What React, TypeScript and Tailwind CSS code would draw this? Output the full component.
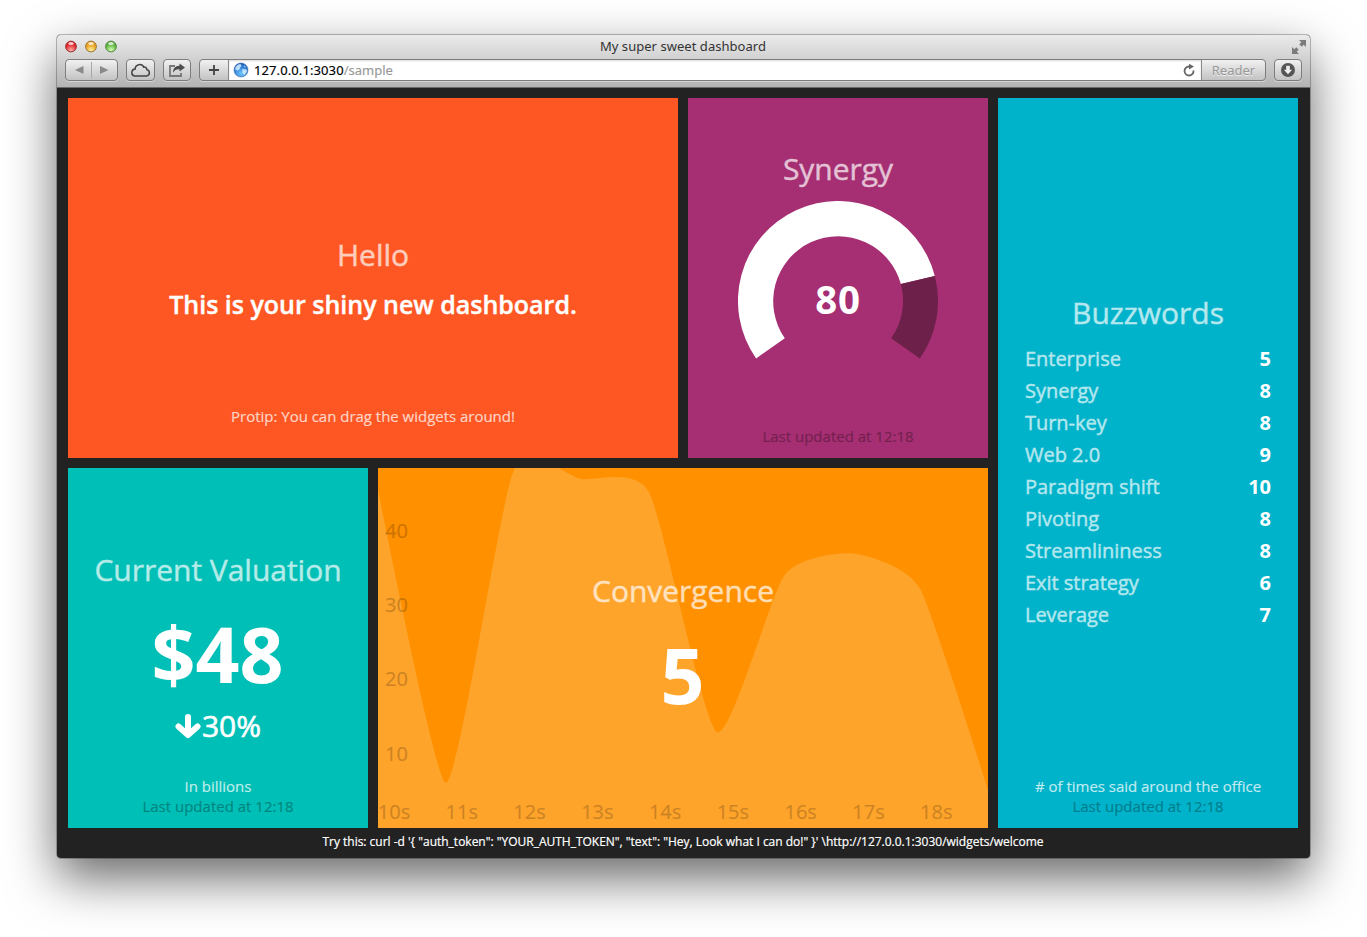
import React from "react";

const buzzwords: [string, number][] = [
  ["Enterprise", 5],
  ["Synergy", 8],
  ["Turn-key", 8],
  ["Web 2.0", 9],
  ["Paradigm shift", 10],
  ["Pivoting", 8],
  ["Streamlininess", 8],
  ["Exit strategy", 6],
  ["Leverage", 7],
];

const button =
  "flex h-[22px] items-center justify-center rounded-[4px] border border-[#7d7d7d] bg-gradient-to-b from-[#f1f1f1] to-[#c3c3c3] shadow-[0_1px_0_rgba(255,255,255,0.4)]";

function Chrome() {
  return (
    <header className="flex h-[53px] flex-col rounded-t-[4px] border-b border-[#6a6a6a] bg-gradient-to-b from-[#ebebeb] to-[#b3b3b3] font-['Noto_Sans',sans-serif]">
      <div className="grid h-[24px] grid-cols-3 items-center pl-[7px] pr-[3px]">
        <svg className="-mt-px" width="56" height="16" viewBox="0 0 56 16">
          <defs>
            {[
              ["red", "#ffb0a8", "#e0242a"],
              ["amber", "#fff0a0", "#e8a020"],
              ["green", "#d8ffb8", "#5cb440"],
            ].map(([id, a, b]) => (
              <radialGradient key={id} id={id} cx="0.5" cy="0.85" r="0.75">
                <stop offset="0" stopColor={a} />
                <stop offset="0.75" stopColor={b} />
              </radialGradient>
            ))}
          </defs>
          <circle cx="7" cy="7.500" r="5.400" fill="url(#red)" stroke="#8c2b2b" strokeOpacity="0.85" />
          <circle cx="27" cy="7.500" r="5.400" fill="url(#amber)" stroke="#8c6420" strokeOpacity="0.85" />
          <circle cx="47" cy="7.500" r="5.400" fill="url(#green)" stroke="#457a30" strokeOpacity="0.85" />
          <g fill="#fff" fillOpacity="0.75">
            <ellipse cx="7" cy="4.500" rx="2.800" ry="1.500" />
            <ellipse cx="27" cy="4.500" rx="2.800" ry="1.500" />
            <ellipse cx="47" cy="4.500" rx="2.800" ry="1.500" />
          </g>
        </svg>
        <div className="-mt-0.5 whitespace-nowrap pr-[5px] text-center text-[13px] leading-[22px] tracking-[0.04px] text-[#333]">My super sweet dashboard</div>
        <svg className="-mt-px justify-self-end" width="16" height="16" viewBox="0 0 16 16" fill="#7c7c7c">
          <path d="M8 1h7v7l-2.300-2.300-2 2-2.400-2.400 2-2zM8 15H1V8l2.300 2.300 2-2 2.400 2.400-2 2z" />
        </svg>
      </div>
      <div className="flex pl-2 pr-2">
        <div className={button + " w-[53px]"}>
          <svg width="51" height="20" viewBox="0 0 51 20">
            <path d="M17.500 6v8l-8.500-4zM34 6v8l8.500-4z" fill="#8a8a8a" />
            <path d="M25.500 2v16" stroke="#a8a8a8" />
          </svg>
        </div>
        <div className={button + " ml-2 w-[29px]"}>
          <svg width="21" height="14" viewBox="0 0 21 14" fill="none" stroke="#444" strokeWidth="1.500">
            <path d="M4.500 13h12a3.200 3.200 0 0 0 .4-6.300 2.500 2.500 0 0 0-3.100-2.500 4.500 4.500 0 0 0-8.600 1.900 3.500 3.500 0 0 0-.7 6.900z" />
          </svg>
        </div>
        <div className={button + " ml-2 w-[28px]"}>
          <svg width="18" height="16" viewBox="0 0 18 16">
            <path d="M7 4H2v10h11v-3" fill="none" stroke="#777" strokeWidth="1.800" />
            <path d="M11.500 1.500l5.500 4-5.500 4V7.200C8.500 7 6.500 8 5 10.800c0-4 2-7 6.500-7z" fill="#4c4c4c" />
          </svg>
        </div>
        <div className={button + " ml-2 flex-1"}>
          <div className="flex h-full w-[29px] items-center justify-center border-r border-[#888]">
            <svg width="12" height="12" viewBox="0 0 12 12">
              <path d="M6 1v10M1 6h10" stroke="#444" strokeWidth="1.800" />
            </svg>
          </div>
          <div className="flex h-full flex-1 items-center bg-white pl-1 shadow-[inset_0_1px_2px_rgba(0,0,0,0.15)]">
            <svg width="16" height="16" viewBox="0 0 16 16">
              <defs>
                <radialGradient id="globe" cx="0.5" cy="0.75" r="0.7">
                  <stop offset="0" stopColor="#6cc6ff" />
                  <stop offset="1" stopColor="#1d5fc0" />
                </radialGradient>
              </defs>
              <circle cx="8" cy="8" r="7" fill="url(#globe)" stroke="#2a5a9c" strokeWidth="0.500" />
              <path d="M2.500 5.500c1-2 3-3.500 5-3.500l1 2L7 5.500l-.5 2L4 8.500 2.300 7.500zM9.500 7l4 .5 .5 2-2.500 3.500-1.500-1-.8-2.500zM11 3l2 2-1.500.5z" fill="#d3efff" fillOpacity="0.85" />
            </svg>
            <span className="ml-[5px] mt-px flex-1 text-[13px] tracking-[0.1px] text-black [-webkit-text-stroke:0.15px]">
              127.0.0.1:3030<span className="tracking-[0px] text-[#999]">/sample</span>
            </span>
            <svg className="mr-[5px]" width="14" height="14" viewBox="0 0 14 14">
              <path d="M11.500 7.500A4.500 4.500 0 1 1 7 3.500h1" fill="none" stroke="#666" strokeWidth="1.800" />
              <path d="M7 .8l5 2.700-5 3z" fill="#666" />
            </svg>
          </div>
          <div className="flex h-full w-[64px] items-center justify-center border-l border-[#888] pt-px text-[13px] text-[#999] [text-shadow:0_1px_0_#eee]">Reader</div>
        </div>
        <div className={button + " ml-2 w-[28px]"}>
          <svg width="16" height="16" viewBox="0 0 16 16">
            <circle cx="8" cy="8" r="7" fill="#555" />
            <path d="M6.200 3.800h3.600v4h2.300L8 12.300 3.900 7.800h2.300z" fill="#eee" />
          </svg>
        </div>
      </div>
    </header>
  );
}

const points = [22, 315, 3, 11, 24.5, 264, 107, 85.5, 121, 322].map((y, i) => [i * 67.78, y]);

function cardinalPath() {
  const tangent = (i: number) => [
    0.1 * (points[i + 1][0] - points[i - 1][0]),
    0.1 * (points[i + 1][1] - points[i - 1][1]),
  ];
  const last = points.length - 1;
  const first = tangent(1);
  let d = `M${points[0]}Q${points[1][0] - first[0] * 0.67},${points[1][1] - first[1] * 0.67} ${points[1]}`;
  for (let i = 2; i < last; i++) {
    const a = tangent(i - 1);
    const b = tangent(i);
    d += `C${points[i - 1][0] + a[0]},${points[i - 1][1] + a[1]} ${points[i][0] - b[0]},${points[i][1] - b[1]} ${points[i]}`;
  }
  const end = tangent(last - 1);
  d += `Q${points[last - 1][0] + end[0] * 0.67},${points[last - 1][1] + end[1] * 0.67} ${points[last]}`;
  return d + "V360H0Z";
}

function Title({ children }: { children: React.ReactNode }) {
  return (
    <h1 className="h-10 whitespace-nowrap pt-px text-[30px] leading-10 tracking-[-0.02px] text-white opacity-70 [-webkit-text-stroke:0.4px]">
      {children}
    </h1>
  );
}

function Updated() {
  return <p className="text-[15px] leading-5 text-black opacity-30 [-webkit-text-stroke:0.2px]">Last updated at 12:18</p>;
}

function Info({ children }: { children: React.ReactNode }) {
  return <p className="text-[15px] leading-5 tracking-[-0.02px] text-white opacity-75 [-webkit-text-stroke:0.12px]">{children}</p>;
}

function Convergence() {
  return (
    <section className="relative col-span-2 h-[360px] overflow-hidden bg-[#ff9000] pt-[102px] text-center">
      <svg className="absolute inset-0" width="610" height="360" viewBox="0 0 610 360">
        <path d={cardinalPath()} fill="#ffa42b" />
        <g fill="#000" stroke="#000" strokeWidth="0.200" opacity="0.2" fontSize="20">
          {[40, 30, 20, 10].map((n, i) => (
            <text key={n} x="7" y={69.8 + i * 74.3}>{n}</text>
          ))}
          {[10, 11, 12, 13, 14, 15, 16, 17, 18].map((n, i) => (
            <text key={n} x={i * 67.78 - 0.2} y="351">{n}s</text>
          ))}
        </g>
      </svg>
      <div className="relative">
        <Title>Convergence</Title>
        <h2 className="mt-[15px] pr-px text-[77px] font-bold leading-[100px] text-white">5</h2>
      </div>
    </section>
  );
}

export default function App() {
  return (
    <div className="h-[937px] w-[1367px] overflow-hidden bg-white pl-[57px] pt-[35px] font-['Open_Sans',sans-serif]">
      <div className="h-[823px] w-[1253px] rounded-[4px] bg-[#222] shadow-[0_0_0_1px_rgba(0,0,0,0.25),0_20px_50px_rgba(0,0,0,0.6)]">
        <Chrome />
        <main className="grid grid-cols-[300px_300px_300px_300px] grid-rows-[360px_360px] gap-[10px] pl-[11px] pt-[10px] text-center">
          <section className="col-span-2 bg-[#fe5723] pt-[136px]">
            <Title>Hello</Title>
            <h3 className="mt-[13px] text-[25px] font-semibold leading-[34px] text-white [-webkit-text-stroke:0.4px]">This is your shiny new dashboard.</h3>
            <div className="mt-[85px]">
              <Info>Protip: You can drag the widgets around!</Info>
            </div>
          </section>
          <section className="bg-[#a52f72] pt-[50px]">
            <Title>Synergy</Title>
            <svg className="mx-auto mt-[13px]" width="200" height="160" viewBox="0 0 200 160">
              <path d="M18.100 157.400A100 100 0 1 1 196.800 75L162.900 83.100A65 65 0 1 0 46.800 137.300Z" fill="#fff" />
              <path d="M196.800 75A100 100 0 0 1 181.900 157.400L153.200 137.300A65 65 0 0 0 162.900 83.100Z" fill="#6c204a" />
              <text x="100" y="113" textAnchor="middle" fontSize="38.500" letterSpacing="0.800" fontWeight="700" fill="#fff">80</text>
            </svg>
            <div className="mt-[65px]"><Updated /></div>
          </section>
          <section className="row-span-2 bg-[#00b3ca] pt-[194px]">
            <Title>Buzzwords</Title>
            <ul className="mt-[11px] px-[27px] text-[20px] leading-8 tracking-[-0.03px]">
              {buzzwords.map(([label, value]) => (
                <li key={label} className="flex justify-between">
                  <span className="text-white opacity-70 [-webkit-text-stroke:0.4px]">{label}</span>
                  <span className="font-bold text-white">{value}</span>
                </li>
              ))}
            </ul>
            <div className="mt-[145px]">
              <Info># of times said around the office</Info>
            </div>
            <Updated />
          </section>
          <section className="bg-[#00bfb6] pt-[81px]">
            <Title>Current Valuation</Title>
            <h2 className="mt-[15px] pr-px text-[77px] font-bold leading-[100px] text-white">$48</h2>
            <div className="mt-[2px] flex h-10 items-center justify-center text-[30px] leading-10 text-white [-webkit-text-stroke:0.6px]">
              <svg width="27" height="27" viewBox="0 0 27 27" fill="none" stroke="#fff" strokeWidth="6" strokeLinecap="round" strokeLinejoin="round">
                <path d="M13 4v17M3.500 13.500l9.500 8.500 9.500-8.500" />
              </svg>
              <span>30%</span>
            </div>
            <div className="mt-[30px]">
              <Info>In billions</Info>
            </div>
            <Updated />
          </section>
          <Convergence />
        </main>
        <footer className="mt-1 whitespace-nowrap pr-px text-center text-[12px] leading-5 tracking-[-0.01px] text-white [-webkit-text-stroke:0.2px]">
          {`Try this: curl -d '{ "auth_token": "YOUR_AUTH_TOKEN", "text": "Hey, Look what I can do!" }' \\http://127.0.0.1:3030/widgets/welcome`}
        </footer>
      </div>
    </div>
  );
}
